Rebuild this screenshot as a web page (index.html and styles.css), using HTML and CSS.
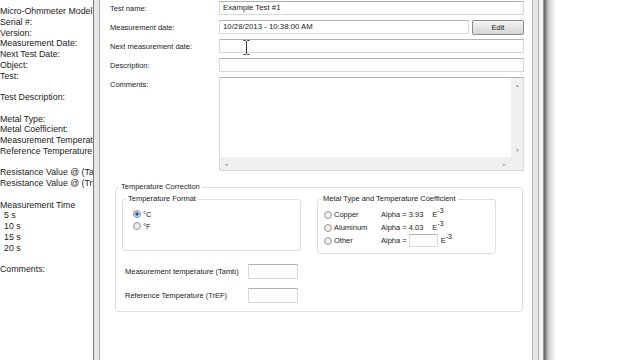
FILE: index.html
```html
<!DOCTYPE html>
<html>
<head>
<title>Test Properties</title>
<link rel="stylesheet" href="styles.css">
</head>
<body>

<div class="screen">
    <div class="report">
        <div class="line">Micro-Ohmmeter Model:</div>
        <div class="line">Serial #:</div>
        <div class="line">Version:</div>
        <div class="line">Measurement Date:</div>
        <div class="line">Next Test Date:</div>
        <div class="line">Object:</div>
        <div class="line">Test:</div>
        <div class="line gap"></div>
        <div class="line">Test Description:</div>
        <div class="line gap"></div>
        <div class="line">Metal Type:</div>
        <div class="line">Metal Coefficient:</div>
        <div class="line">Measurement Temperature (Tamb):</div>
        <div class="line">Reference Temperature (TrEF):</div>
        <div class="line gap"></div>
        <div class="line">Resistance Value @ (Tamb):</div>
        <div class="line">Resistance Value @ (TrEF):</div>
        <div class="line gap"></div>
        <div class="line">Measurement Time</div>
        <div class="line indent">5 s</div>
        <div class="line indent">10 s</div>
        <div class="line indent">15 s</div>
        <div class="line indent">20 s</div>
        <div class="line gap"></div>
        <div class="line">Comments:</div>
    </div>

    <div class="dialog">
        <div class="client">
            <div class="row">
                <span class="label">Test name:</span>
                <div class="field">Example Test #1</div>
            </div>
            <div class="row date-row">
                <span class="label">Measurement date:</span>
                <div class="date-wrap">
                    <div class="field">10/28/2013 - 10:38:00 AM</div>
                    <button class="btn">Edit</button>
                </div>
            </div>
            <div class="row">
                <span class="label">Next measurement date:</span>
                <div class="field"></div>
            </div>
            <div class="row">
                <span class="label">Description:</span>
                <div class="field"></div>
            </div>
            <div class="row memo-row">
                <span class="label">Comments:</span>
                <div class="memo">
                    <div class="memo-text"></div>
                    <div class="vscroll"><span>&#9652;</span><span>&#9662;</span></div>
                    <div class="hscroll"><span>&#9666;</span><span>&#9656;</span></div>
                    <div class="corner"></div>
                </div>
            </div>

            <fieldset class="group outer">
                <legend>Temperature Correction</legend>
                <div class="outer-body">
                    <div class="tc-top">
                        <fieldset class="group fmt">
                            <legend>Temperature Format</legend>
                            <div class="fmt-body">
                                <div class="opt"><span class="radio checked"></span><span>&deg;C</span></div>
                                <div class="opt"><span class="radio"></span><span>&deg;F</span></div>
                            </div>
                        </fieldset>
                        <fieldset class="group metal">
                            <legend>Metal Type and Temperature Coefficient</legend>
                            <div class="metal-body">
                                <div class="opt">
                                    <span class="radio"></span><span class="opt-name">Copper</span>
                                    <span>Alpha = 3.93</span><span class="exp">E<sup>-3</sup></span>
                                </div>
                                <div class="opt">
                                    <span class="radio"></span><span class="opt-name">Aluminum</span>
                                    <span>Alpha = 4.03</span><span class="exp">E<sup>-3</sup></span>
                                </div>
                                <div class="opt">
                                    <span class="radio"></span><span class="opt-name">Other</span>
                                    <span>Alpha =</span><div class="field alpha-field"></div><span class="exp near">E<sup>-3</sup></span>
                                </div>
                            </div>
                        </fieldset>
                    </div>
                    <div class="temp-row">
                        <span>Measurement temperature (Tamb)</span>
                        <div class="field temp-field"></div>
                    </div>
                    <div class="temp-row">
                        <span>Reference Temperature (TrEF)</span>
                        <div class="field temp-field"></div>
                    </div>
                </div>
            </fieldset>
        </div>
    </div>
    <div class="shadow"></div>

    <svg class="cursor" width="7" height="15" viewBox="0 0 7 15">
        <path d="M0.5 0.5 H2.5 L3.5 1.5 L4.5 0.5 H6.5 M3.5 1.5 V13.5 M0.5 14.5 H2.5 L3.5 13.5 L4.5 14.5 H6.5" fill="none" stroke="#333" stroke-width="1"/>
    </svg>
</div>

</body>
</html>
```

FILE: styles.css
```css
body {
    margin: 0;
    padding: 0;
    background-color: #fff;
    font-family: 'Liberation Sans', Arial, sans-serif;
    overflow: hidden;
}
.screen {
    position: relative;
    display: flex;
    width: 640px;
    height: 360px;
    overflow: hidden;
}
.report {
    flex: none;
    width: 93px;
    overflow: hidden;
    white-space: nowrap;
    padding-top: 6px;
    font-size: 8.8px;
    line-height: 10.75px;
    color: #222;
}
.report .gap {
    height: 10.75px;
}
.report .indent {
    padding-left: 4px;
}
.dialog {
    flex: none;
    display: flex;
    width: 451px;
    box-sizing: border-box;
    background-color: #e6e6e6;
    border-left: 1px solid #7c7c7c;
    border-right: 1px solid #9a9a9a;
    padding: 0 10px 0 5px;
    box-shadow: inset -4px 0 0 #f2f2f2, inset -5px 0 0 #b4b4b4;
}
.client {
    flex: 1;
    background-color: #fff;
    border-left: 1px solid #a9a9a9;
    border-right: 1px solid #b8b8b8;
    padding: 1px 8px 0 10px;
    font-size: 7.5px;
    color: #222;
}
.shadow {
    flex: none;
    width: 12px;
    background: linear-gradient(to right, #5e5e5e, #cfcfcf 40%, #fff);
}
.row {
    display: grid;
    grid-template-columns: 109px 1fr;
    align-items: center;
    margin-bottom: 5px;
}
.date-row {
    margin-bottom: 4px;
}
.field {
    height: 14px;
    box-sizing: border-box;
    border: 1px solid #d5d8dc;
    border-top-color: #aeb1b6;
    background-color: #fff;
    padding-left: 3px;
    line-height: 12px;
    font-size: 7.8px;
    white-space: nowrap;
}
.date-wrap {
    display: flex;
    gap: 3px;
}
.date-wrap .field {
    flex: 1;
}
.btn {
    width: 52px;
    height: 15px;
    padding: 0;
    border: 1px solid #8a8a8a;
    border-radius: 2px;
    background: linear-gradient(#f4f4f4, #e4e4e4 50%, #d6d6d6);
    font-family: inherit;
    font-size: 7.5px;
    color: #222;
}
.memo-row {
    align-items: start;
}
.memo-row .label {
    padding-top: 3px;
}
.memo {
    height: 94px;
    box-sizing: border-box;
    border: 1px solid #d5d8dc;
    border-top-color: #aeb1b6;
    display: grid;
    grid-template-columns: 1fr 12px;
    grid-template-rows: 1fr 13px;
}
.vscroll, .hscroll, .corner {
    background-color: #efefef;
    color: #999;
    font-size: 5px;
}
.vscroll {
    display: flex;
    flex-direction: column;
    justify-content: space-between;
    align-items: center;
    padding: 4px 0;
}
.hscroll {
    display: flex;
    justify-content: space-between;
    align-items: center;
    padding: 0 5px;
}
.group {
    margin: 0;
    padding: 0;
    border: 1px solid #dedede;
    border-radius: 3px;
    min-width: 0;
}
.group legend {
    padding: 0 2px;
    margin-left: 3px;
    font-size: 7.5px;
    line-height: 10px;
}
.outer {
    margin: 11px 1px 0 5px;
}
.outer-body {
    padding: 2px 0 8px 6px;
}
.tc-top {
    display: flex;
    align-items: flex-start;
    gap: 16px;
}
.fmt, .metal {
    width: 179px;
    box-sizing: border-box;
}
.fmt-body {
    height: 46px;
    box-sizing: border-box;
    padding: 4px 0 0 10px;
}
.metal-body {
    height: 49px;
    box-sizing: border-box;
    padding: 4px 0 0 6px;
}
.opt {
    display: flex;
    align-items: center;
    height: 12px;
    gap: 2px;
}
.metal-body .opt {
    height: 13px;
}
.opt-name {
    width: 45px;
}
.radio {
    width: 8px;
    height: 8px;
    box-sizing: border-box;
    border-radius: 50%;
    border: 1px solid #9a9a9a;
    background: radial-gradient(circle, #f8f8f8, #dadada);
}
.radio.checked {
    background: radial-gradient(circle, #1f3f6a 0, #3a6aa0 30%, #bcd3ea 50%, #e6eef6 100%);
    border-color: #7d8ea3;
}
.exp {
    margin-left: 7px;
}
.exp.near {
    margin-left: 1px;
}
.exp sup {
    font-size: 7px;
    vertical-align: 4px;
    line-height: 0;
}
.alpha-field {
    width: 29px;
    height: 13px;
    margin-left: 0;
}
.temp-row {
    display: grid;
    grid-template-columns: 123px 50px;
    align-items: center;
    padding-left: 3px;
    margin-top: 9px;
}
.tc-top + .temp-row {
    margin-top: 10px;
}
.temp-field {
    height: 15px;
}
.cursor {
    position: absolute;
    left: 243px;
    top: 40px;
}
```
